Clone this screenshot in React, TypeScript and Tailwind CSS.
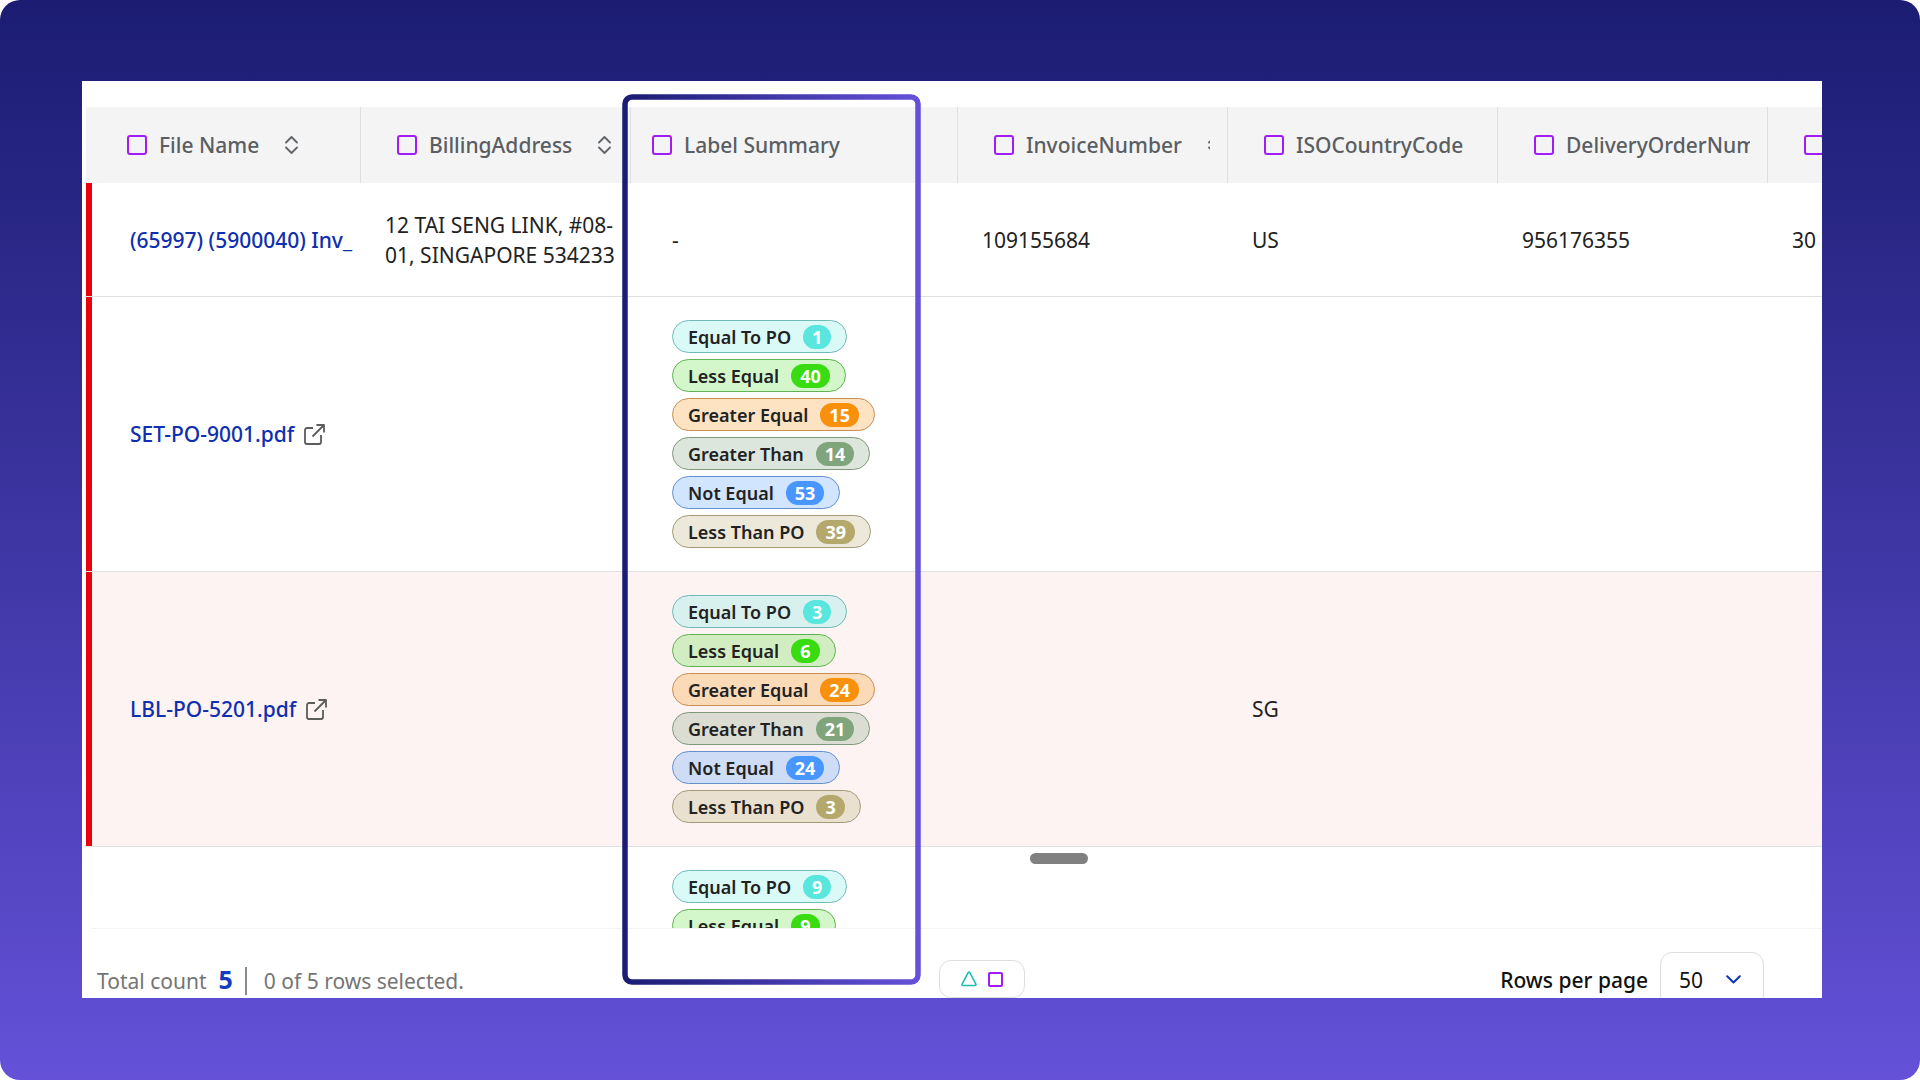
import React from "react";

type Tone = "teal" | "green" | "orange" | "sage" | "blue" | "olive";

const tones: Record<Tone, { label: string; chip: string; badge: string }> = {
  teal: { label: "Equal To PO", chip: "border-[#70bab8] bg-[#58e6de]/22", badge: "bg-[#58e6de]" },
  green: { label: "Less Equal", chip: "border-[#60b450] bg-[#38dc10]/22", badge: "bg-[#38dc10]" },
  orange: { label: "Greater Equal", chip: "border-[#c88e50] bg-[#f8900c]/25", badge: "bg-[#f8900c]" },
  sage: { label: "Greater Than", chip: "border-[#80987c] bg-[#80a47c]/27", badge: "bg-[#80a47c]" },
  blue: { label: "Not Equal", chip: "border-[#6490d0] bg-[#4896ff]/25", badge: "bg-[#4896ff]" },
  olive: { label: "Less Than PO", chip: "border-[#a49a76] bg-[#b4a86c]/25", badge: "bg-[#b4a86c]" },
};

const order: Tone[] = ["teal", "green", "orange", "sage", "blue", "olive"];

type Column = { name: string; width: string; pad: string; sort: boolean };

const columns: Column[] = [
  { name: "File Name", width: "w-[275px]", pad: "pl-[41px]", sort: true },
  { name: "BillingAddress", width: "w-[270px]", pad: "pl-9", sort: true },
  { name: "Label Summary", width: "w-[327px]", pad: "pl-[21px]", sort: false },
  { name: "InvoiceNumber", width: "w-[270px]", pad: "pl-9", sort: true },
  { name: "ISOCountryCode", width: "w-[270px]", pad: "pl-9", sort: true },
  { name: "DeliveryOrderNumber", width: "w-[270px]", pad: "pl-9", sort: true },
  { name: "", width: "w-[270px]", pad: "pl-9", sort: false },
];

type Row = {
  file?: string;
  external?: boolean;
  address?: string;
  counts?: number[];
  invoice?: string;
  country?: string;
  order?: string;
  extra?: string;
  flagged: boolean;
  tinted?: boolean;
};

const rows: Row[] = [
  {
    file: "(65997) (5900040) Inv_",
    address: "12 TAI SENG LINK, #08-01, SINGAPORE 534233",
    invoice: "109155684",
    country: "US",
    order: "956176355",
    extra: "30",
    flagged: true,
  },
  { file: "SET-PO-9001.pdf", external: true, counts: [1, 40, 15, 14, 53, 39], flagged: true },
  { file: "LBL-PO-5201.pdf", external: true, counts: [3, 6, 24, 21, 24, 3], country: "SG", flagged: true, tinted: true },
  { counts: [9, 9], flagged: false },
];

function SortIcon() {
  return (
    <svg width="13" height="18" viewBox="0 0 13 18" fill="none" stroke="#5f6368" strokeWidth="1.8" strokeLinecap="round" strokeLinejoin="round">
      <path d="M1 6.5 6.5 1 12 6.5M1 11.5 6.5 17 12 11.5" />
    </svg>
  );
}

function ExternalIcon() {
  return (
    <svg width="21" height="21" viewBox="0 0 21 21" fill="none" stroke="#5c5c5c" strokeWidth="1.8" strokeLinejoin="round">
      <path d="M9 4H3a2 2 0 0 0-2 2v12a2 2 0 0 0 2 2h12a2 2 0 0 0 2-2v-7" />
      <path d="M12.5 1H20v7.5M20 1 8.5 12.5" />
    </svg>
  );
}

function Chip({ tone, count }: { tone: Tone; count: number }) {
  const t = tones[tone];
  return (
    <li className={`flex h-[33px] items-center gap-3 rounded-full border px-[15px] text-[18px] leading-6 font-semibold text-[#222222] ${t.chip}`}>
      {t.label}
      <span className={`h-6 rounded-full px-[9px] font-bold text-white ${t.badge}`}>{count}</span>
    </li>
  );
}

function HeaderCell({ column }: { column: Column }) {
  return (
    <th className="border-r border-[#dedfe0] bg-[#f4f4f4] p-0 text-left font-medium">
      <div className={`mr-[17px] overflow-hidden ${column.pad}`}>
        <div className="flex items-center whitespace-nowrap">
          <label className="flex items-center gap-3">
            <input
              type="checkbox"
              aria-label={column.name || "Select column"}
              className="size-5 shrink-0 appearance-none rounded-[3px] border-2 border-[#a31cf8]"
            />
            {column.name}
          </label>
          {column.sort && (
            <button type="button" aria-label={`Sort by ${column.name}`} className="ml-[26px] shrink-0">
              <SortIcon />
            </button>
          )}
        </div>
      </div>
    </th>
  );
}

function BodyRow({ row }: { row: Row }) {
  const cell = "border-b border-[#dfe0e1] px-6 py-0";
  return (
    <tr className={`h-[114px] ${row.tinted ? "bg-[#fdf3f2]" : "bg-white"}`}>
      <td className="h-px border-b border-[#dfe0e1] p-0">
        <div className="flex h-full items-stretch">
          <span className={`w-[6px] shrink-0 ${row.flagged ? "bg-[#e9000c]" : "bg-transparent"}`} />
          {row.file && (
            <a href="#file" className="flex items-center gap-[10px] pl-[38px] font-medium whitespace-nowrap text-[#0f2fae]">
              {row.file}
              {row.external && <ExternalIcon />}
            </a>
          )}
        </div>
      </td>
      <td className={cell}>{row.address && <div className="-mr-3">{row.address}</div>}</td>
      <td className="border-b border-[#dfe0e1] py-[23px] pr-4 pl-[41px]">
        {row.counts ? (
          <ul className="flex flex-col items-start gap-[6px]">
            {row.counts.map((n, i) => (
              <Chip key={order[i]} tone={order[i]} count={n} />
            ))}
          </ul>
        ) : (
          "-"
        )}
      </td>
      <td className={cell}>{row.invoice}</td>
      <td className={cell}>{row.country}</td>
      <td className={cell}>{row.order}</td>
      <td className={cell}>{row.extra}</td>
    </tr>
  );
}

function HighlightFrame() {
  return (
    <div className="pointer-events-none absolute top-[13px] bottom-[13px] left-[540px] w-[300px]">
      <svg className="size-full overflow-visible">
        <defs>
          <linearGradient id="frame" x1="0" y1="0" x2="1" y2="0">
            <stop offset="0" stopColor="#1b1c74" />
            <stop offset="1" stopColor="#6551d9" />
          </linearGradient>
        </defs>
        <rect x="3" y="3" width="293" height="885" rx="7" fill="none" stroke="url(#frame)" strokeWidth="5.5" />
      </svg>
    </div>
  );
}

function Footer() {
  return (
    <footer className="ml-[5px] flex h-[70px] shrink-0 items-start justify-between overflow-hidden border-t border-[#f4f4f4] pr-[58px] pl-[6px]">
      <div className="flex flex-1 items-baseline pt-[37px] text-[#757575]">
        Total count
        <strong className="ml-3 text-[25px] leading-6 font-bold text-[#173bbf]">5</strong>
        <span className="ml-3 h-7 w-[2px] self-center bg-[#8a8a8a]" />
        <span className="ml-[17px]">0 of 5 rows selected.</span>
      </div>
      <button type="button" aria-label="Shape filter" className="mt-[31px] ml-[102px] flex h-[38px] items-center gap-[11px] rounded-[12px] border border-[#dedede] px-[21px]">
        <svg width="16" height="16" viewBox="0 0 16 16" fill="none" stroke="#1fbfb0" strokeWidth="1.6" strokeLinejoin="round">
          <path d="M7.2 1.6 1.1 13.2a.9.9 0 0 0 .8 1.3h12.2a.9.9 0 0 0 .8-1.3L8.8 1.6a.9.9 0 0 0-1.6 0Z" />
        </svg>
        <span className="size-[15px] rounded-[2px] border-2 border-[#a31cf8]" />
      </button>
      <div className="flex flex-1 items-start justify-end">
        <label htmlFor="rows" className="mt-9 mr-3 font-medium text-[#111111]">
          Rows per page
        </label>
        <div className="relative mt-[23px]">
          <select id="rows" defaultValue="50" className="h-14 w-[104px] appearance-none rounded-[12px] border border-[#dedede] bg-transparent pl-[18px] text-[#111111]">
            <option>50</option>
          </select>
          <svg className="pointer-events-none absolute top-[23px] right-[23px]" width="15" height="9" viewBox="0 0 15 9" fill="none" stroke="#1034b8" strokeWidth="2" strokeLinecap="round" strokeLinejoin="round">
            <path d="M1.2 1.2 7.5 7.5 13.8 1.2" />
          </svg>
        </div>
      </div>
    </footer>
  );
}

export default function App() {
  return (
    <div className="bg-white">
      <main className="flex h-screen flex-col rounded-[20px] bg-gradient-to-b from-[#1b1c72] to-[#6451d8] pt-[81px] pr-[98px] pb-[82px] pl-[82px] font-['Noto_Sans',sans-serif] text-[21px] leading-[30px] text-[#222222]">
        <section className="relative flex min-h-0 flex-1 flex-col overflow-hidden bg-white pt-[26px] pl-1">
          <div className="relative min-h-0 flex-1 overflow-hidden">
            <table className="w-[1952px] table-fixed border-separate border-spacing-0">
              <colgroup>
                {columns.map((c, i) => (
                  <col key={i} className={c.width} />
                ))}
              </colgroup>
              <thead>
                <tr className="h-[76px] text-[#5a5e63]">
                  {columns.map((c, i) => (
                    <HeaderCell key={i} column={c} />
                  ))}
                </tr>
              </thead>
              <tbody>
                {rows.map((r, i) => (
                  <BodyRow key={i} row={r} />
                ))}
              </tbody>
            </table>
            <div className="absolute bottom-16 left-[944px] h-[11px] w-[58px] rounded-full bg-[#808080]" />
          </div>
          <Footer />
          <HighlightFrame />
        </section>
      </main>
    </div>
  );
}
